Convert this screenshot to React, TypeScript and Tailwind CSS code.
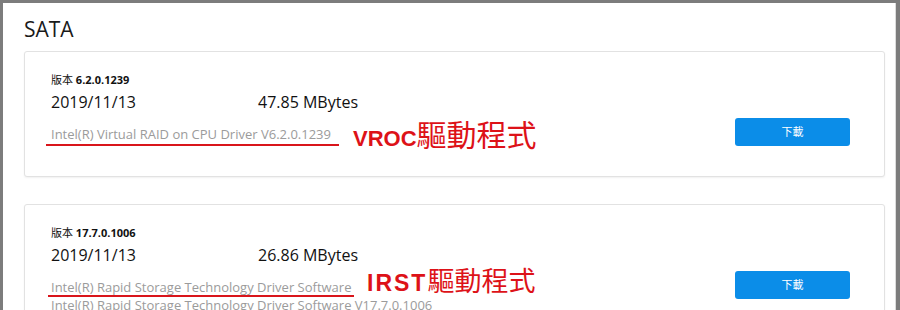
const drivers = [
  {
    version: '6.2.0.1239',
    date: '2019/11/13',
    size: '47.85 MBytes',
    lines: ['Intel(R) Virtual RAID on CPU Driver V6.2.0.1239'],
    tag: 'VROC',
    underline: 'top-[92px] left-[21px] w-[293px]',
    label: 'top-[65px] left-[328px]',
    tagText: 'text-[22px]',
    cjkText: 'text-[30px]',
  },
  {
    version: '17.7.0.1006',
    date: '2019/11/13',
    size: '26.86 MBytes',
    lines: [
      'Intel(R) Rapid Storage Technology Driver Software',
      'Intel(R) Rapid Storage Technology Driver Software V17.7.0.1006',
    ],
    tag: 'IRST',
    underline: 'top-[90px] left-[23px] w-[306px]',
    label: 'top-[59px] left-[342px]',
    tagText: 'text-[23px] tracking-[2px]',
    cjkText: 'text-[27px]',
  },
];

function DriverCard({ d }: { d: (typeof drivers)[number] }) {
  return (
    <div className="relative flex items-start rounded-[3px] border border-[#e2e2e2] bg-white pl-[26px] pr-[34px] pt-[20px] shadow-[0_1px_2px_rgba(0,0,0,0.06)]">
      <div className="flex-1 pb-[33px]">
        <div className="h-[16px] text-[11px] leading-[16px] text-[#111]">
          版本 <span className="font-bold">{d.version}</span>
        </div>
        <div className="mt-[2px] flex h-[24px] text-[16px] leading-[24px] text-[#111]">
          <span className="w-[207px]">{d.date}</span>
          <span>{d.size}</span>
        </div>
        <div className="mt-[11px]">
          {d.lines.map((l) => (
            <div key={l} className="h-[18px] whitespace-nowrap text-[13px] leading-[18px] text-[#9b9b9b]">
              {l}
            </div>
          ))}
        </div>
      </div>
      <button className="mt-[46px] block h-[28px] w-[115px] rounded-[3px] bg-[#0b8de8] text-[11px] text-white">
        下載
      </button>

      {/* red annotations drawn over the screenshot */}
      <div className={`absolute h-[2px] bg-[#d9151b] ${d.underline}`} />
      <div
        className={`absolute whitespace-nowrap leading-[32px] text-[#dd1218] ${d.label}`}
        style={{ fontFamily: '"Noto Sans CJK TC", sans-serif' }}
      >
        <span className={`font-['Liberation_Sans',sans-serif] font-bold ${d.tagText}`}>{d.tag}</span>
        <span className={d.cjkText}>驅動程式</span>
      </div>
    </div>
  );
}

export default function App() {
  return (
    <div className="flex h-[310px] w-[900px] overflow-hidden bg-[#7c7c7c] pl-[3px] pr-[4px] pt-[3px] font-['Open_Sans','Noto_Sans_CJK_TC',sans-serif]">
      <div className="flex-1 border-r border-[#dcdcdc] bg-white pl-[21px] pr-[10px] pt-[12px]">
        <h2 className="h-[36px] text-[21px] leading-[28px] text-[#1a1a1a]">SATA</h2>
        <div className="flex flex-col gap-[27px]">
          {drivers.map((d) => (
            <DriverCard key={d.tag} d={d} />
          ))}
        </div>
      </div>
    </div>
  );
}
